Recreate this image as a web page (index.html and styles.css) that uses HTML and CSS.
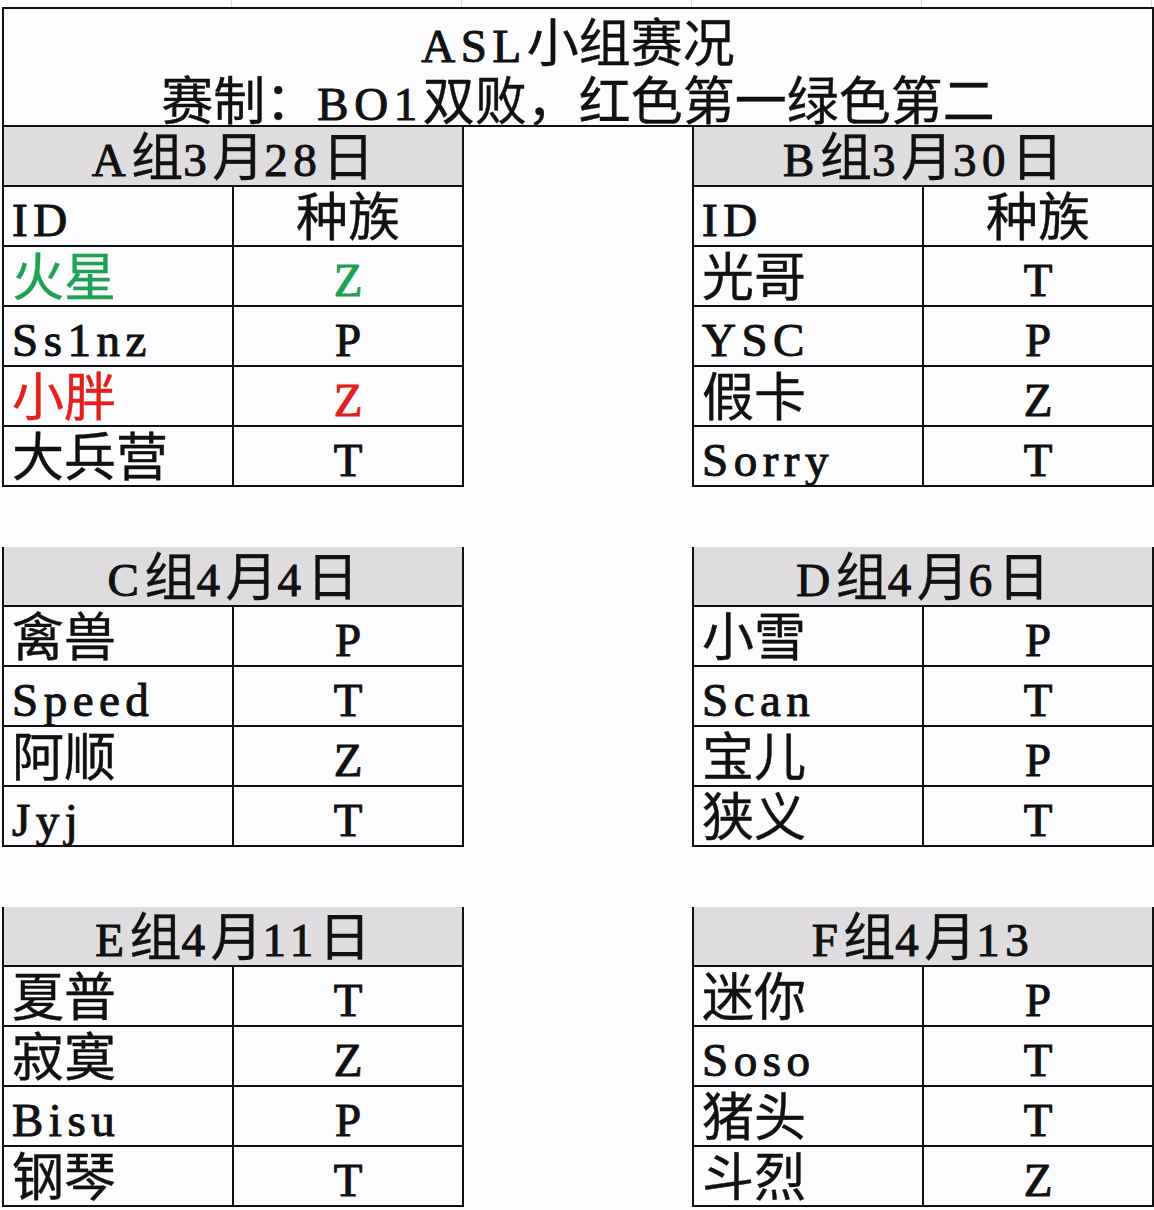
FILE: index.html
```html
<!DOCTYPE html>
<html lang="zh-CN">
<head>
<meta charset="utf-8">
<title>ASL小组赛况</title>
<link rel="stylesheet" href="styles.css">
</head>
<body>
<div class="sheet">
  <div class="topstrip"><i></i><i></i><i></i><i></i><i></i></div>
  <div class="title">
    <div class="t1"><span class="lat">ASL</span>小组赛况</div>
    <div class="t2">赛制：<span class="lat">BO1</span>双败，红色第一绿色第二</div>
  </div>
  <div class="groups">
    <table class="grp">
      <tr><th colspan="2"><div class="c"><span class="lat">A</span>组<span class="lat">3</span>月<span class="lat">28</span>日</div></th></tr>
      <tr><td class="id"><div class="c"><span class="lat">ID</span></div></td><td class="race"><div class="c">种族</div></td></tr>
      <tr class="green"><td class="id"><div class="c">火星</div></td><td class="race"><div class="c"><span class="lat">Z</span></div></td></tr>
      <tr><td class="id"><div class="c"><span class="lat">Ss1nz</span></div></td><td class="race"><div class="c"><span class="lat">P</span></div></td></tr>
      <tr class="red"><td class="id"><div class="c">小胖</div></td><td class="race"><div class="c"><span class="lat">Z</span></div></td></tr>
      <tr><td class="id"><div class="c">大兵营</div></td><td class="race"><div class="c"><span class="lat">T</span></div></td></tr>
    </table>
    <div class="spacer"></div>
    <table class="grp">
      <tr><th colspan="2"><div class="c"><span class="lat">B</span>组<span class="lat">3</span>月<span class="lat">30</span>日</div></th></tr>
      <tr><td class="id"><div class="c"><span class="lat">ID</span></div></td><td class="race"><div class="c">种族</div></td></tr>
      <tr><td class="id"><div class="c">光哥</div></td><td class="race"><div class="c"><span class="lat">T</span></div></td></tr>
      <tr><td class="id"><div class="c"><span class="lat">YSC</span></div></td><td class="race"><div class="c"><span class="lat">P</span></div></td></tr>
      <tr><td class="id"><div class="c">假卡</div></td><td class="race"><div class="c"><span class="lat">Z</span></div></td></tr>
      <tr><td class="id"><div class="c"><span class="lat">Sorry</span></div></td><td class="race"><div class="c"><span class="lat">T</span></div></td></tr>
    </table>

    <table class="grp">
      <tr><th colspan="2"><div class="c"><span class="lat">C</span>组<span class="lat">4</span>月<span class="lat">4</span>日</div></th></tr>
      <tr><td class="id"><div class="c">禽兽</div></td><td class="race"><div class="c"><span class="lat">P</span></div></td></tr>
      <tr><td class="id"><div class="c"><span class="lat">Speed</span></div></td><td class="race"><div class="c"><span class="lat">T</span></div></td></tr>
      <tr><td class="id"><div class="c">阿顺</div></td><td class="race"><div class="c"><span class="lat">Z</span></div></td></tr>
      <tr><td class="id"><div class="c"><span class="lat">Jyj</span></div></td><td class="race"><div class="c"><span class="lat">T</span></div></td></tr>
    </table>
    <div class="spacer"></div>
    <table class="grp">
      <tr><th colspan="2"><div class="c"><span class="lat">D</span>组<span class="lat">4</span>月<span class="lat">6</span>日</div></th></tr>
      <tr><td class="id"><div class="c">小雪</div></td><td class="race"><div class="c"><span class="lat">P</span></div></td></tr>
      <tr><td class="id"><div class="c"><span class="lat">Scan</span></div></td><td class="race"><div class="c"><span class="lat">T</span></div></td></tr>
      <tr><td class="id"><div class="c">宝儿</div></td><td class="race"><div class="c"><span class="lat">P</span></div></td></tr>
      <tr><td class="id"><div class="c">狭义</div></td><td class="race"><div class="c"><span class="lat">T</span></div></td></tr>
    </table>

    <table class="grp">
      <tr><th colspan="2"><div class="c"><span class="lat">E</span>组<span class="lat">4</span>月<span class="lat">11</span>日</div></th></tr>
      <tr><td class="id"><div class="c">夏普</div></td><td class="race"><div class="c"><span class="lat">T</span></div></td></tr>
      <tr><td class="id"><div class="c">寂寞</div></td><td class="race"><div class="c"><span class="lat">Z</span></div></td></tr>
      <tr><td class="id"><div class="c"><span class="lat">Bisu</span></div></td><td class="race"><div class="c"><span class="lat">P</span></div></td></tr>
      <tr><td class="id"><div class="c">钢琴</div></td><td class="race"><div class="c"><span class="lat">T</span></div></td></tr>
    </table>
    <div class="spacer"></div>
    <table class="grp">
      <tr><th colspan="2"><div class="c"><span class="lat">F</span>组<span class="lat">4</span>月<span class="lat">13</span></div></th></tr>
      <tr><td class="id"><div class="c">迷你</div></td><td class="race"><div class="c"><span class="lat">P</span></div></td></tr>
      <tr><td class="id"><div class="c"><span class="lat">Soso</span></div></td><td class="race"><div class="c"><span class="lat">T</span></div></td></tr>
      <tr><td class="id"><div class="c">猪头</div></td><td class="race"><div class="c"><span class="lat">T</span></div></td></tr>
      <tr><td class="id"><div class="c">斗烈</div></td><td class="race"><div class="c"><span class="lat">Z</span></div></td></tr>
    </table>
  </div>
</div>
</body>
</html>
```

FILE: styles.css
```css
html, body {
  margin: 0;
  padding: 0;
  background: #fcfbfd;
}
body {
  font-family: "Noto Sans CJK SC", sans-serif;
  color: #111;
  -webkit-text-stroke: 0.4px currentColor;
}
.sheet {
  width: 1152px;
  margin-left: 2px;
}
.topstrip {
  display: flex;
  height: 7px;
}
.topstrip i {
  width: 230px;
  border-right: 1px solid #d8d8d8;
  box-sizing: border-box;
}
.lat {
  font-family: "Liberation Serif", serif;
  font-size: 47px;
  letter-spacing: 5.5px;
  line-height: 0;
  -webkit-text-stroke: 1px currentColor;
}
.title {
  border: 2px solid #111;
  height: 120px;
  box-sizing: border-box;
  text-align: center;
  font-size: 52px;
  line-height: 54px;
  white-space: nowrap;
}
.title .t1 {
  height: 58px;
  padding-top: 4px;
}
.title .t2 {
  height: 54px;
}
.groups {
  display: grid;
  grid-template-columns: 462px 228px 462px;
  row-gap: 60px;
}
.grp {
  border-collapse: collapse;
  width: 462px;
  table-layout: fixed;
}
.grp th, .grp td {
  border: 2px solid #111;
  padding: 0;
  font-size: 52px;
  vertical-align: top;
}
.grp tr:first-child th {
  border-top: none;
}
.grp .c {
  height: 58px;
  line-height: 54px;
  white-space: nowrap;
  overflow: visible;
}
.grp th {
  background: #dedcdf;
  font-weight: normal;
  text-align: center;
}
.grp td.id {
  text-align: left;
  padding-left: 8px;
  width: 220px;
}
.grp td.race {
  text-align: center;
}
.grp td.race .lat {
  letter-spacing: 0;
}
.grp tr.green td {
  color: #1fa155;
}
.grp tr.red td {
  color: #e3201c;
}
```
